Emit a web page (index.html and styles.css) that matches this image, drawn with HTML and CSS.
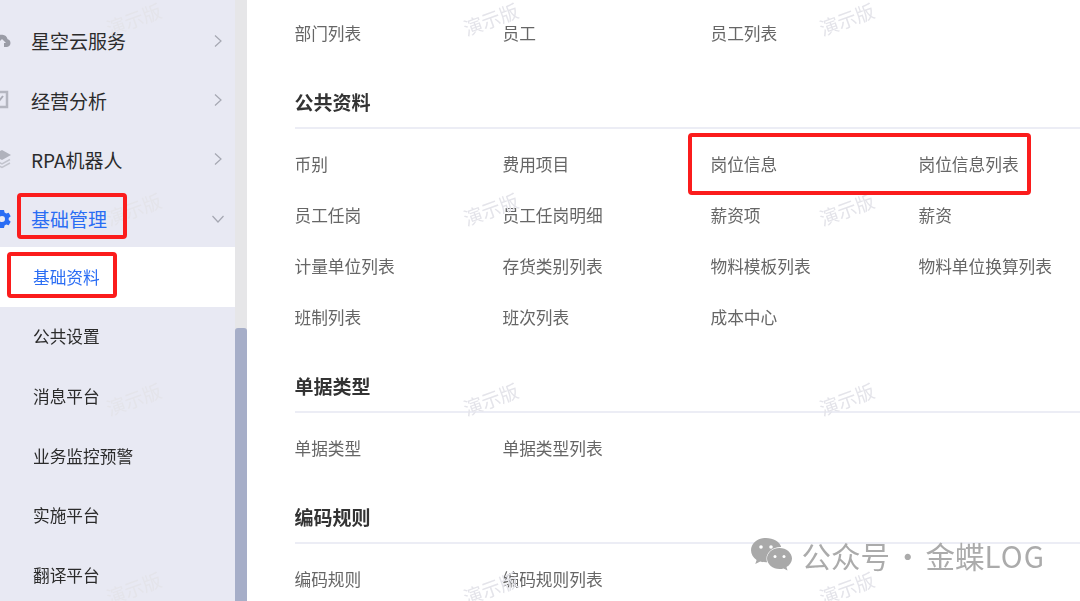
FILE: index.html
```html
<!DOCTYPE html>
<html lang="zh-CN">
<head>
  <meta charset="UTF-8">
  <title>基础资料</title>
  <link rel="stylesheet" href="styles.css">
</head>
<body>
  <div class="page">
    <!-- 左侧菜单 -->
    <aside class="sidebar">
      <div class="menu-item">
        <svg class="menu-icon" viewBox="0 0 20 20"><path fill="#9a9ca6" d="M5 16a4.500 4.500 0 0 1-.6-9A6 6 0 0 1 15.600 8.200 4 4 0 0 1 15 16h-3v-4h2l-4-4-4 4h2v4z"/></svg>
        <span class="menu-text">星空云服务</span>
        <svg class="chevron" viewBox="0 0 10 14"><path d="M2 1.500 8 7l-6 5.500"/></svg>
      </div>
      <div class="menu-item">
        <svg class="menu-icon" viewBox="0 0 20 20"><path fill="none" stroke="#b4b6c0" stroke-width="2.500" d="M-2 2h17v15H-2z"/><path fill="none" stroke="#a9abb5" stroke-width="2" d="M1 13l4-3 2 1 4-5"/></svg>
        <span class="menu-text">经营分析</span>
        <svg class="chevron" viewBox="0 0 10 14"><path d="M2 1.500 8 7l-6 5.500"/></svg>
      </div>
      <div class="menu-item">
        <svg class="menu-icon" viewBox="0 0 20 20"><path fill="#b0b2bc" d="M10 1l9 5-9 5-9-5z"/><path fill="none" stroke="#c2c4cd" stroke-width="1.500" d="M2 10.500l8 4.500 8-4.500M2 14l8 4.500 8-4.500"/></svg>
        <span class="menu-text">RPA机器人</span>
        <svg class="chevron" viewBox="0 0 10 14"><path d="M2 1.500 8 7l-6 5.500"/></svg>
      </div>
      <div class="menu-item active">
        <svg class="menu-icon" viewBox="0 0 20 20"><path fill="#2a6df4" fill-rule="evenodd" d="M8 1h4l.6 2.600 1.600.9 2.500-.8 2 3.500-2 1.800v2l2 1.800-2 3.500-2.500-.8-1.600.9L12 19H8l-.6-2.600-1.600-.9-2.500.8-2-3.500 2-1.800v-2l-2-1.800 2-3.500 2.500.8 1.600-.9zM10 7a3 3 0 1 0 0 6 3 3 0 0 0 0-6z"/></svg>
        <span class="menu-text">基础管理</span>
        <svg class="chevron down" viewBox="0 0 14 10"><path d="M1.500 2 7 8l5.500-6"/></svg>
      </div>
      <div class="sub-item current">基础资料</div>
      <div class="sub-item">公共设置</div>
      <div class="sub-item">消息平台</div>
      <div class="sub-item">业务监控预警</div>
      <div class="sub-item">实施平台</div>
      <div class="sub-item">翻译平台</div>
    </aside>

    <div class="scrollbar"><div class="thumb"></div></div>

    <!-- 右侧内容 -->
    <main class="content">
      <div class="links">
        <a>部门列表</a><a>员工</a><a>员工列表</a>
      </div>

      <h2 class="section-title">公共资料</h2>
      <div class="links">
        <a>币别</a><a>费用项目</a><a>岗位信息</a><a>岗位信息列表</a>
        <a>员工任岗</a><a>员工任岗明细</a><a>薪资项</a><a>薪资</a>
        <a>计量单位列表</a><a>存货类别列表</a><a>物料模板列表</a><a>物料单位换算列表</a>
        <a>班制列表</a><a>班次列表</a><a>成本中心</a>
      </div>

      <h2 class="section-title">单据类型</h2>
      <div class="links">
        <a>单据类型</a><a>单据类型列表</a>
      </div>

      <h2 class="section-title">编码规则</h2>
      <div class="links">
        <a>编码规则</a><a>编码规则列表</a>
      </div>
    </main>

    <!-- 水印 -->
    <div class="watermarks">
      <span>演示版</span><span>演示版</span><span>演示版</span>
      <span>演示版</span><span>演示版</span><span>演示版</span>
      <span>演示版</span><span>演示版</span><span>演示版</span>
      <span>演示版</span><span>演示版</span><span>演示版</span>
    </div>

    <!-- 红框标注 -->
    <div class="mark mark-menu"></div>
    <div class="mark mark-sub"></div>
    <div class="mark mark-post"></div>

    <!-- 公众号署名 -->
    <div class="signature">
      <svg class="wechat" viewBox="0 0 41 34">
        <path fill="#a9a9a9" d="M15 0C6.700 0 0 5.500 0 12.300c0 3.900 2.200 7.300 5.600 9.600L4.300 26l4.900-2.600c1.800.5 3.800.9 5.800.9h1.100c-.4-1.200-.6-2.400-.6-3.700 0-6.500 6.200-11.700 13.900-11.700h.8C28.700 3.600 22.400 0 15 0z"/>
        <path fill="#a9a9a9" d="M41 20.500C41 14.700 35.300 10 28.500 10S16 14.700 16 20.500 21.700 31 28.500 31c1.400 0 2.800-.2 4.100-.6l3.900 2.200-1-3.500c3.300-2 5.500-5.100 5.500-8.600z"/>
        <circle fill="#fff" cx="10" cy="9" r="1.800"/><circle fill="#fff" cx="20" cy="9" r="1.800"/>
        <circle fill="#fff" cx="24" cy="18.500" r="1.500"/><circle fill="#fff" cx="33" cy="18.500" r="1.500"/>
      </svg>
      <span>公众号 · 金蝶<span class="latin">LOG</span></span>
    </div>
  </div>
</body>
</html>
```

FILE: styles.css
```css
* {
  box-sizing: border-box;
}
html, body {
  margin: 0;
  height: 100%;
  overflow: hidden;
}
body {
  font-family: "Noto Sans CJK SC", "Noto Sans", sans-serif;
  background-color: #fff;
  color: #333;
}
.page {
  position: relative;
  display: flex;
  width: 1080px;
  height: 601px;
  overflow: hidden;
  filter: blur(0.3px);
}

/* sidebar */
.sidebar {
  width: 235px;
  flex-shrink: 0;
  padding-top: 10px;
  background-color: #e8e9f3;
}
.menu-item {
  display: flex;
  align-items: center;
  height: 59.250px;
  padding-top: 2.500px;
  padding-right: 12px;
  color: #2b2b2b;
  font-size: 19px;
}
.menu-item.active {
  color: #2a6df4;
}
.menu-icon {
  width: 20px;
  height: 20px;
  margin-left: -8px;
  margin-right: 19px;
  flex-shrink: 0;
  overflow: visible;
}
.menu-text {
  flex: 1;
}
.chevron {
  width: 10px;
  height: 14px;
  fill: none;
  stroke: #a5a7b2;
  stroke-width: 1.200;
}
.chevron.down {
  width: 14px;
  height: 10px;
  margin-right: -2px;
}
.sub-item {
  display: flex;
  align-items: center;
  height: 59.600px;
  padding-left: 33px;
  color: #2b2b2b;
  font-size: 16.700px;
}
.sub-item.current {
  background-color: #fff;
  color: #2a6df4;
}

/* scrollbar */
.scrollbar {
  width: 12px;
  flex-shrink: 0;
  padding-top: 328px;
  background-color: #e6e6e8;
}
.thumb {
  height: 100%;
  background-color: #a6aec8;
  border-radius: 3px 3px 0 0;
}

/* content */
.content {
  flex: 1;
  padding: 7.500px 0 0 47.500px;
}
.links {
  display: grid;
  grid-template-columns: repeat(4, 208px);
  grid-auto-rows: 51px;
  align-items: center;
  color: #666;
  font-size: 16.700px;
}
.section-title {
  margin: 28.500px 0 9.500px;
  padding-bottom: 10px;
  border-bottom: 2px solid #ecedf5;
  color: #333;
  font-size: 19px;
  font-weight: 700;
  line-height: 30px;
}

/* watermark */
.watermarks {
  position: absolute;
  top: -76px;
  left: -44.500px;
  display: grid;
  grid-template-columns: repeat(3, 356.500px);
  grid-auto-rows: 189.700px;
  place-items: center;
  color: #e4e4ea;
  font-size: 19px;
  pointer-events: none;
}
.watermarks span {
  transform: rotate(-20deg);
}

/* red boxes */
.mark {
  position: absolute;
  border: 4px solid #fb1c1c;
  border-radius: 4px;
}
.mark-menu {
  left: 17px;
  top: 193px;
  width: 110px;
  height: 46px;
}
.mark-sub {
  left: 7px;
  top: 252px;
  width: 110px;
  height: 46px;
}
.mark-post {
  left: 688px;
  top: 133px;
  width: 343px;
  height: 62px;
}

/* signature */
.signature {
  position: absolute;
  right: 35px;
  top: 533px;
  display: flex;
  align-items: center;
  gap: 9px;
  color: #ababab;
  font-size: 29.500px;
  line-height: 44px;
  white-space: nowrap;
  word-spacing: -3.500px;
}
.latin {
  letter-spacing: 1px;
}
.wechat {
  width: 41px;
  height: 34px;
}
```
